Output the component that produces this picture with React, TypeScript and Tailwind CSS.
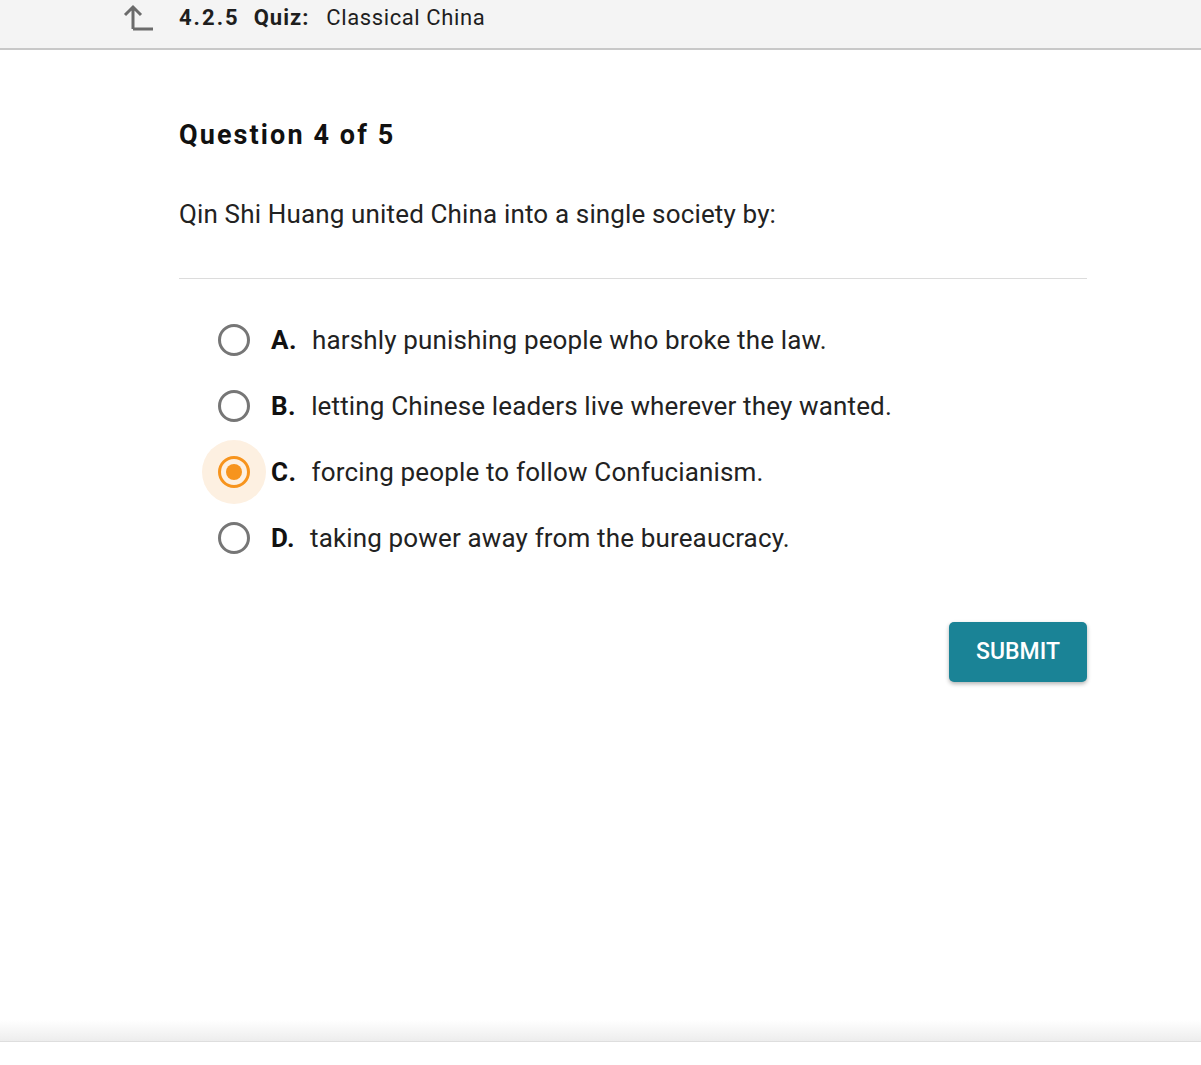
import { useState } from "react";

const options = [
  { letter: "A.", text: "harshly punishing people who broke the law." },
  { letter: "B.", text: "letting Chinese leaders live wherever they wanted." },
  { letter: "C.", text: "forcing people to follow Confucianism." },
  { letter: "D.", text: "taking power away from the bureaucracy." },
];

export default function App() {
  const [selected, setSelected] = useState(2);

  return (
    <div
      className="relative w-[1201px] h-[1065px] bg-white text-[#222] overflow-hidden"
      style={{ fontFamily: "Roboto, 'Liberation Sans', sans-serif" }}
    >
      <header className="h-[50px] bg-[#f4f4f4] border-b-2 border-[#c8c8c8] flex items-start pt-[2px]">
        <div className="flex items-center h-[30px]">
          <svg
            className="ml-[122px] w-[32px] h-[30px]"
            viewBox="0 0 32 30"
            fill="none"
            stroke="#6b6b6b"
            strokeWidth="3"
          >
            <path d="M11 27 V5 M3 13 L11 5 L19 13 M11 27 H31" />
          </svg>
          <div className="ml-[25px] flex items-baseline text-[22px] text-[#1e1e1e]">
            <span className="font-bold tracking-[2px]">4.2.5</span>
            <span className="font-bold ml-[14px] tracking-[1px]">Quiz:</span>
            <span className="ml-[17px] tracking-[0.6px]">Classical China</span>
          </div>
        </div>
      </header>

      <main className="pl-[179px] w-[1087px]">
        <h1 className="mt-[68px] text-[27px] font-bold leading-[34px] text-[#111] tracking-[2.1px]">
          Question 4 of 5
        </h1>
        <p className="mt-[46px] text-[26px] leading-[32px] text-[#222] tracking-[0.15px]">
          Qin Shi Huang united China into a single society by:
        </p>
        <div className="mt-[48px] h-px bg-[#dcdcdc]" />

        <div className="mt-[29px] flex flex-col gap-[2px] pl-[23px]">
          {options.map((o, i) => {
            const on = selected === i;
            return (
              <button
                key={o.letter}
                onClick={() => setSelected(i)}
                className="flex items-center h-[64px] text-left cursor-pointer"
              >
                <span
                  className={`w-[64px] h-[64px] rounded-full flex items-center justify-center ${
                    on ? "bg-[#fdf0e1]" : ""
                  }`}
                >
                  {on ? (
                    <span className="w-[32px] h-[32px] rounded-full border-[3px] border-[#f7941d] flex items-center justify-center">
                      <span className="w-[16px] h-[16px] rounded-full bg-[#f7941d]" />
                    </span>
                  ) : (
                    <span className="w-[32px] h-[32px] rounded-full border-[3px] border-[#767676]" />
                  )}
                </span>
                <span className="ml-[5px] text-[26px] font-bold text-[#111] tracking-[0.5px]">{o.letter}</span>
                <span className="ml-[15px] text-[26px] text-[#222] tracking-[0.15px]">{o.text}</span>
              </button>
            );
          })}
        </div>

        <div className="mt-[52px] flex justify-end">
          <button className="w-[138px] h-[60px] rounded-[5px] bg-[#1a8396] text-white text-[23px] font-medium shadow-[0_2px_4px_rgba(0,0,0,0.3)]">
            SUBMIT
          </button>
        </div>
      </main>

      <div className="absolute left-0 right-0 top-[1020px] h-[22px] bg-gradient-to-b from-white to-[#ededed] border-b border-[#dedede]" />
    </div>
  );
}
